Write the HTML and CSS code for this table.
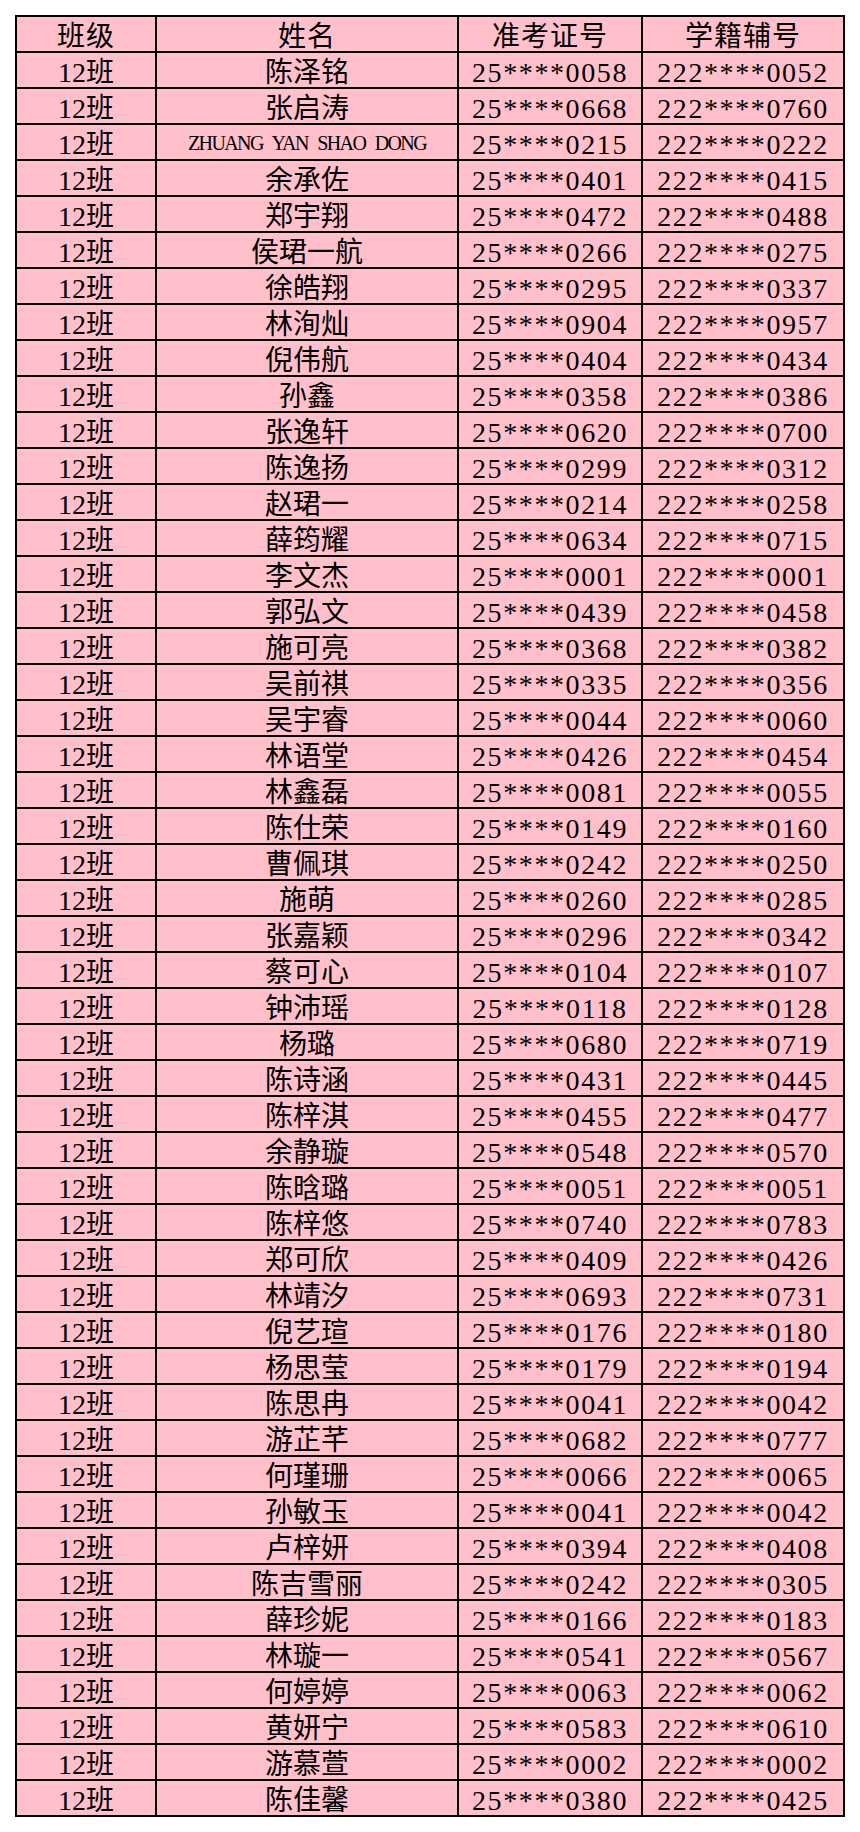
FILE: index.html
```html
<!DOCTYPE html>
<html lang="zh-CN">
<head>
<meta charset="utf-8">
<title>12班名单</title>
<link rel="stylesheet" href="styles.css">
</head>
<body>
<div class="sheet">
  <div class="cell head">班级</div><div class="cell head">姓名</div><div class="cell head">准考证号</div><div class="cell head">学籍辅号</div>
  <div class="cell">12班</div><div class="cell">陈泽铭</div><div class="cell id">25****0058</div><div class="cell id">222****0052</div>
  <div class="cell">12班</div><div class="cell">张启涛</div><div class="cell id">25****0668</div><div class="cell id">222****0760</div>
  <div class="cell">12班</div><div class="cell latin">ZHUANG YAN SHAO DONG</div><div class="cell id">25****0215</div><div class="cell id">222****0222</div>
  <div class="cell">12班</div><div class="cell">余承佐</div><div class="cell id">25****0401</div><div class="cell id">222****0415</div>
  <div class="cell">12班</div><div class="cell">郑宇翔</div><div class="cell id">25****0472</div><div class="cell id">222****0488</div>
  <div class="cell">12班</div><div class="cell">侯珺一航</div><div class="cell id">25****0266</div><div class="cell id">222****0275</div>
  <div class="cell">12班</div><div class="cell">徐皓翔</div><div class="cell id">25****0295</div><div class="cell id">222****0337</div>
  <div class="cell">12班</div><div class="cell">林洵灿</div><div class="cell id">25****0904</div><div class="cell id">222****0957</div>
  <div class="cell">12班</div><div class="cell">倪伟航</div><div class="cell id">25****0404</div><div class="cell id">222****0434</div>
  <div class="cell">12班</div><div class="cell">孙鑫</div><div class="cell id">25****0358</div><div class="cell id">222****0386</div>
  <div class="cell">12班</div><div class="cell">张逸轩</div><div class="cell id">25****0620</div><div class="cell id">222****0700</div>
  <div class="cell">12班</div><div class="cell">陈逸扬</div><div class="cell id">25****0299</div><div class="cell id">222****0312</div>
  <div class="cell">12班</div><div class="cell">赵珺一</div><div class="cell id">25****0214</div><div class="cell id">222****0258</div>
  <div class="cell">12班</div><div class="cell">薛筠耀</div><div class="cell id">25****0634</div><div class="cell id">222****0715</div>
  <div class="cell">12班</div><div class="cell">李文杰</div><div class="cell id">25****0001</div><div class="cell id">222****0001</div>
  <div class="cell">12班</div><div class="cell">郭弘文</div><div class="cell id">25****0439</div><div class="cell id">222****0458</div>
  <div class="cell">12班</div><div class="cell">施可亮</div><div class="cell id">25****0368</div><div class="cell id">222****0382</div>
  <div class="cell">12班</div><div class="cell">吴前祺</div><div class="cell id">25****0335</div><div class="cell id">222****0356</div>
  <div class="cell">12班</div><div class="cell">吴宇睿</div><div class="cell id">25****0044</div><div class="cell id">222****0060</div>
  <div class="cell">12班</div><div class="cell">林语堂</div><div class="cell id">25****0426</div><div class="cell id">222****0454</div>
  <div class="cell">12班</div><div class="cell">林鑫磊</div><div class="cell id">25****0081</div><div class="cell id">222****0055</div>
  <div class="cell">12班</div><div class="cell">陈仕荣</div><div class="cell id">25****0149</div><div class="cell id">222****0160</div>
  <div class="cell">12班</div><div class="cell">曹佩琪</div><div class="cell id">25****0242</div><div class="cell id">222****0250</div>
  <div class="cell">12班</div><div class="cell">施萌</div><div class="cell id">25****0260</div><div class="cell id">222****0285</div>
  <div class="cell">12班</div><div class="cell">张嘉颖</div><div class="cell id">25****0296</div><div class="cell id">222****0342</div>
  <div class="cell">12班</div><div class="cell">蔡可心</div><div class="cell id">25****0104</div><div class="cell id">222****0107</div>
  <div class="cell">12班</div><div class="cell">钟沛瑶</div><div class="cell id">25****0118</div><div class="cell id">222****0128</div>
  <div class="cell">12班</div><div class="cell">杨璐</div><div class="cell id">25****0680</div><div class="cell id">222****0719</div>
  <div class="cell">12班</div><div class="cell">陈诗涵</div><div class="cell id">25****0431</div><div class="cell id">222****0445</div>
  <div class="cell">12班</div><div class="cell">陈梓淇</div><div class="cell id">25****0455</div><div class="cell id">222****0477</div>
  <div class="cell">12班</div><div class="cell">余静璇</div><div class="cell id">25****0548</div><div class="cell id">222****0570</div>
  <div class="cell">12班</div><div class="cell">陈晗璐</div><div class="cell id">25****0051</div><div class="cell id">222****0051</div>
  <div class="cell">12班</div><div class="cell">陈梓悠</div><div class="cell id">25****0740</div><div class="cell id">222****0783</div>
  <div class="cell">12班</div><div class="cell">郑可欣</div><div class="cell id">25****0409</div><div class="cell id">222****0426</div>
  <div class="cell">12班</div><div class="cell">林靖汐</div><div class="cell id">25****0693</div><div class="cell id">222****0731</div>
  <div class="cell">12班</div><div class="cell">倪艺瑄</div><div class="cell id">25****0176</div><div class="cell id">222****0180</div>
  <div class="cell">12班</div><div class="cell">杨思莹</div><div class="cell id">25****0179</div><div class="cell id">222****0194</div>
  <div class="cell">12班</div><div class="cell">陈思冉</div><div class="cell id">25****0041</div><div class="cell id">222****0042</div>
  <div class="cell">12班</div><div class="cell">游芷芊</div><div class="cell id">25****0682</div><div class="cell id">222****0777</div>
  <div class="cell">12班</div><div class="cell">何瑾珊</div><div class="cell id">25****0066</div><div class="cell id">222****0065</div>
  <div class="cell">12班</div><div class="cell">孙敏玉</div><div class="cell id">25****0041</div><div class="cell id">222****0042</div>
  <div class="cell">12班</div><div class="cell">卢梓妍</div><div class="cell id">25****0394</div><div class="cell id">222****0408</div>
  <div class="cell">12班</div><div class="cell">陈吉雪丽</div><div class="cell id">25****0242</div><div class="cell id">222****0305</div>
  <div class="cell">12班</div><div class="cell">薛珍妮</div><div class="cell id">25****0166</div><div class="cell id">222****0183</div>
  <div class="cell">12班</div><div class="cell">林璇一</div><div class="cell id">25****0541</div><div class="cell id">222****0567</div>
  <div class="cell">12班</div><div class="cell">何婷婷</div><div class="cell id">25****0063</div><div class="cell id">222****0062</div>
  <div class="cell">12班</div><div class="cell">黄妍宁</div><div class="cell id">25****0583</div><div class="cell id">222****0610</div>
  <div class="cell">12班</div><div class="cell">游慕萱</div><div class="cell id">25****0002</div><div class="cell id">222****0002</div>
  <div class="cell">12班</div><div class="cell">陈佳馨</div><div class="cell id">25****0380</div><div class="cell id">222****0425</div>
</div>
</body>
</html>
```
FILE: styles.css
```css
html, body {
  margin: 0;
  padding: 0;
  background: #ffffff;
}

body {
  padding: 15px 0 0 15px;
}

.sheet {
  display: grid;
  grid-template-columns: 140px 302px 184px 202px;
  grid-auto-rows: 36px;
  width: 830px;
  box-sizing: border-box;
  border-left: 2px solid #000;
  border-top: 2px solid #000;
  background: #ffc0cb;
  font-family: "Liberation Serif", "Noto Sans CJK SC", serif;
  font-size: 28px;
  color: #000;
}

.cell {
  box-sizing: border-box;
  border-right: 2px solid #000;
  border-bottom: 2px solid #000;
  padding-top: 6px;
  line-height: 28px;
  text-align: center;
  white-space: nowrap;
  overflow: hidden;
}

.head {
  letter-spacing: 1px;
}

.id {
  letter-spacing: 1.6px;
}

.latin {
  padding-top: 4px;
  font-size: 20px;
  letter-spacing: -1.6px;
  word-spacing: 6px;
}
```
